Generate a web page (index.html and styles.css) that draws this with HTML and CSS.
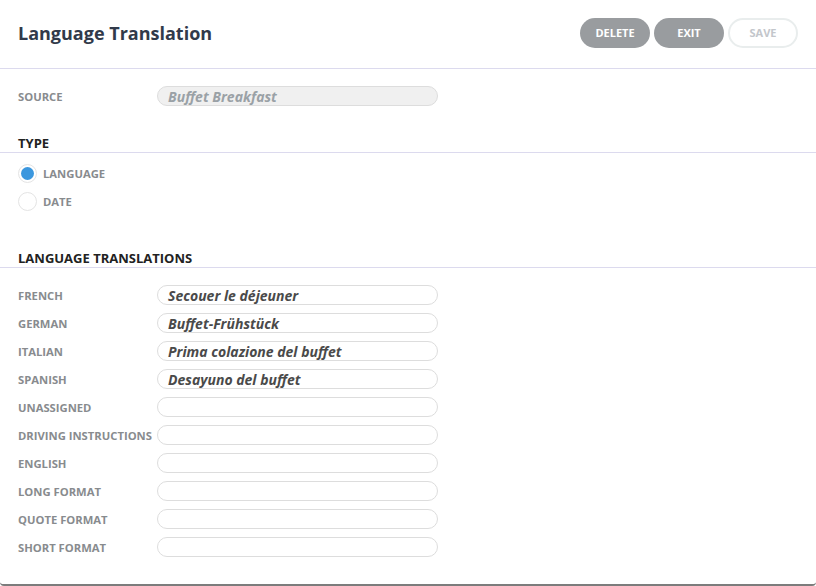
FILE: index.html
```html
<!DOCTYPE html>
<html lang="en">
<head>
    <meta charset="UTF-8">
    <title>Language Translation</title>
    <link rel="stylesheet" href="styles.css">
</head>
<body>
    <div class="modal">
        <div class="header">
            <h1>Language Translation</h1>
            <div class="actions">
                <button class="btn btn-dark">DELETE</button>
                <button class="btn btn-dark">EXIT</button>
                <button class="btn btn-light" disabled>SAVE</button>
            </div>
        </div>

        <div class="row source-row">
            <label>SOURCE</label>
            <div class="field readonly">Buffet Breakfast</div>
        </div>

        <h2 class="section-title type-title">TYPE</h2>
        <div class="radios">
            <div class="radio-row">
                <span class="radio checked"></span>
                <span>LANGUAGE</span>
            </div>
            <div class="radio-row">
                <span class="radio"></span>
                <span>DATE</span>
            </div>
        </div>

        <h2 class="section-title trans-title">LANGUAGE TRANSLATIONS</h2>
        <div class="list">
            <div class="row"><label>FRENCH</label><div class="field">Secouer le déjeuner</div></div>
            <div class="row"><label>GERMAN</label><div class="field">Buffet-Frühstück</div></div>
            <div class="row"><label>ITALIAN</label><div class="field">Prima colazione del buffet</div></div>
            <div class="row"><label>SPANISH</label><div class="field">Desayuno del buffet</div></div>
            <div class="row"><label>UNASSIGNED</label><div class="field"></div></div>
            <div class="row"><label>DRIVING INSTRUCTIONS</label><div class="field"></div></div>
            <div class="row"><label>ENGLISH</label><div class="field"></div></div>
            <div class="row"><label>LONG FORMAT</label><div class="field"></div></div>
            <div class="row"><label>QUOTE FORMAT</label><div class="field"></div></div>
            <div class="row"><label>SHORT FORMAT</label><div class="field"></div></div>
        </div>
    </div>
</body>
</html>
```

FILE: styles.css
```css
* {
    box-sizing: border-box;
}

body {
    margin: 0;
    font-family: "Open Sans", "Noto Sans", sans-serif;
    background: #ffffff;
}

.modal {
    height: 586px;
    border-bottom: 2px solid #7c7c7c;
    border-radius: 0 0 4px 4px;
    overflow: hidden;
}

.header {
    height: 69px;
    display: flex;
    align-items: center;
    justify-content: space-between;
    padding: 0 18px;
    border-bottom: 1px solid #dcdaee;
}

h1 {
    margin: -2px 0 0;
    font-size: 18px;
    font-weight: 700;
    color: #313a4a;
}

.actions {
    display: flex;
    gap: 4px;
    margin-top: -2px;
}

.btn {
    width: 70px;
    height: 30px;
    border-radius: 15px;
    font-family: inherit;
    font-size: 11px;
    font-weight: 700;
    padding-bottom: 2px;
    cursor: pointer;
}

.btn-dark {
    background: #999c9f;
    border: none;
    color: #ffffff;
}

.btn-light {
    background: #ffffff;
    border: 2px solid #e9eded;
    color: #c3c6cb;
}

.row {
    display: flex;
    align-items: center;
    height: 28px;
    padding-left: 18px;
}

.row label {
    width: 139px;
    font-size: 11.25px;
    font-weight: 700;
    color: #888b8e;
    white-space: nowrap;
}

.field {
    width: 281px;
    height: 20px;
    border: 1px solid #dddddd;
    border-radius: 10px;
    padding-left: 10px;
    font-size: 14px;
    font-weight: 700;
    font-style: italic;
    line-height: 20px;
    color: #4a4a4a;
}

.field.readonly {
    background: #f0f0f0;
    color: #9aa1a6;
}

.source-row {
    margin-top: 13px;
}

.section-title {
    margin: 0;
    font-size: 13px;
    font-weight: 700;
    line-height: 18px;
    color: #222222;
    padding: 0 18px;
    border-bottom: 1px solid #dcdaee;
}

.type-title {
    margin-top: 24px;
}

.radios {
    padding: 6px 18px 0;
}

.radio-row {
    display: flex;
    align-items: center;
    height: 28px;
    font-size: 11.25px;
    font-weight: 700;
    color: #888b8e;
}

.radio {
    width: 19px;
    height: 19px;
    border-radius: 50%;
    border: 1px solid #e4e4e4;
    margin-right: 6px;
    display: flex;
    align-items: center;
    justify-content: center;
}

.radio.checked::after {
    content: "";
    width: 13px;
    height: 13px;
    border-radius: 50%;
    background: #3b97de;
}

.trans-title {
    margin-top: 34px;
}

.list {
    padding-top: 13px;
}
```
